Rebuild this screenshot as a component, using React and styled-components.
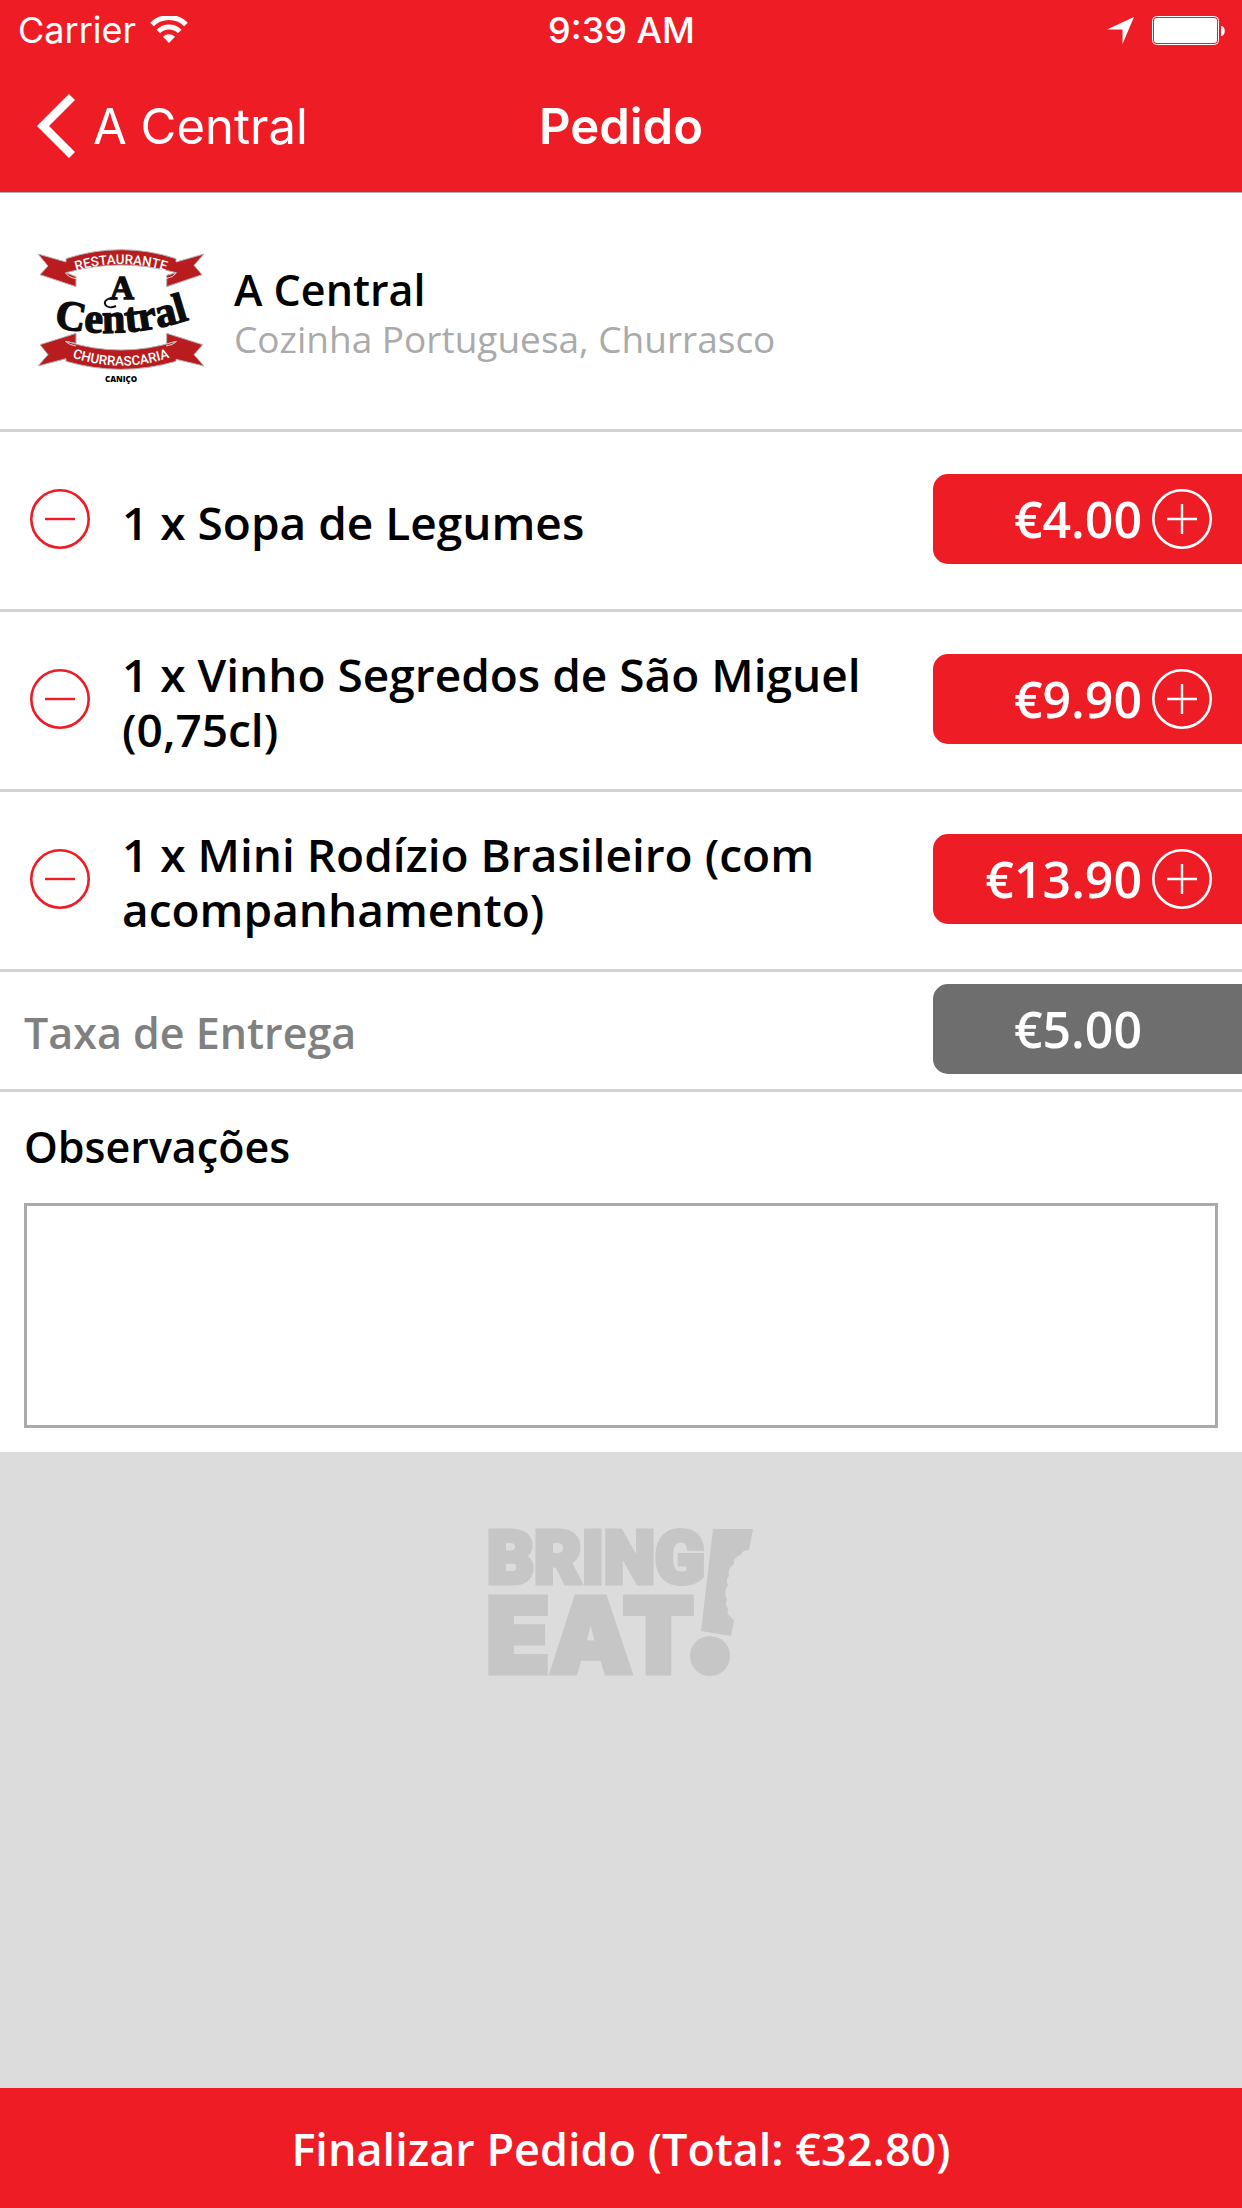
import { useState } from "react";
import styled, { createGlobalStyle } from "styled-components";

const EstiloGlobal = createGlobalStyle`
  * {
    box-sizing: border-box;
  }

  body {
    margin: 0;
    font-family: "Open Sans", "Noto Sans", sans-serif;
    color: #000;
  }

  button {
    border: none;
    padding: 0;
    background: none;
    color: inherit;
    font-family: inherit;
    cursor: pointer;
  }

  svg {
    display: block;
  }
`;

const Pagina = styled.div`
  min-height: 100vh;
  display: flex;
  flex-direction: column;
  background-color: #dcdcdc;
`;
const Topo = styled.header`
  background-color: #ee1c25;
  border-bottom: 1px solid #b2b2b2;
  color: #fff;
  font-family: Inter, Roboto, sans-serif;
`;
const BarraStatus = styled.div`
  display: grid;
  grid-template-columns: 1fr auto 1fr;
  align-items: center;
  height: 60px;
  padding: 0 17px 0 18px;
  font-size: 36px;
`;
const Operadora = styled.span`
  display: flex;
  align-items: center;
  gap: 14px;
`;
const Hora = styled.span`
  font-weight: 500;
`;
const Indicadores = styled.span`
  display: flex;
  align-items: center;
  justify-content: flex-end;
  gap: 18px;
`;
const BarraNavegacao = styled.nav`
  display: grid;
  grid-template-columns: 1fr auto 1fr;
  align-items: center;
  height: 132px;
  padding: 0 36px;
`;
const Voltar = styled.a`
  display: flex;
  align-items: center;
  gap: 18px;
  color: inherit;
  font-size: 49px;
  text-decoration: none;
`;
const Titulo = styled.h1`
  margin: 0;
  font-size: 49px;
  font-weight: 600;
`;
const Conteudo = styled.main`
  background-color: #fff;
`;
const Restaurante = styled.section`
  display: flex;
  align-items: center;
  gap: 28px;
  height: 239px;
  padding-left: 36px;
  border-bottom: 3px solid #d2d2d2;
`;
const Descricao = styled.div`
  padding-top: 5px;
`;
const NomeRestaurante = styled.h2`
  margin: 0;
  font-size: 43px;
  font-weight: 600;
  line-height: 50px;
`;
const Cozinha = styled.p`
  margin: 0;
  color: #aaa;
  font-size: 37px;
  line-height: 48px;
`;
const Lista = styled.ul`
  margin: 0;
  padding: 0;
  list-style: none;
`;
const Linha = styled.li`
  display: flex;
  align-items: center;
  min-height: ${(props) => (props.$baixa ? "120px" : "180px")};
  padding-left: ${(props) => (props.$baixa ? "24px" : "30px")};
  padding-bottom: 3px;
  border-bottom: 3px solid #d2d2d2;
`;
const BotaoCirculo = styled.button`
  flex: none;
  width: 60px;
  height: 60px;
`;
const NomeItem = styled.span`
  flex: 1;
  padding: 6px 24px 0 32px;
  font-size: 46px;
  font-weight: 600;
  line-height: 55px;
`;
const NomeTaxa = styled.span`
  flex: 1;
  padding-top: 6px;
  color: #808080;
  font-size: 43px;
  font-weight: 600;
`;
const Preco = styled.div`
  flex: none;
  display: flex;
  align-items: center;
  justify-content: flex-end;
  gap: 10px;
  width: 309px;
  height: 90px;
  padding-right: ${(props) => (props.$taxa ? "100px" : "30px")};
  border-radius: 15px 0 0 15px;
  background-color: ${(props) => (props.$taxa ? "#6e6e6e" : "#ee1c25")};
  color: #fff;
  font-size: 50px;
  font-weight: 600;
  line-height: 86px;
`;
const Observacoes = styled.section`
  display: flex;
  flex-direction: column;
  gap: 29px;
  padding: 28px 24px 24px;
`;
const Rotulo = styled.label`
  font-size: 43px;
  font-weight: 600;
  line-height: 54px;
`;
const CampoTexto = styled.textarea`
  display: block;
  width: 100%;
  height: 225px;
  padding: 16px;
  border: 3px solid #aaa;
  border-radius: 0;
  outline: none;
  background-color: #fff;
  font-family: inherit;
  font-size: 37px;
  resize: none;
`;
const Marca = styled.div`
  flex: 1;
  display: flex;
  justify-content: center;
  padding: 60px 0;
`;
const Finalizar = styled.button`
  && {
    height: 120px;
    background-color: #ee1c25;
    color: #fff;
    font-size: 45px;
    font-weight: 600;
  }
`;

function IconeWifi() {
  return (
    <svg width="38" height="28" viewBox="0 0 38 28" fill="none" stroke="#fff">
      <path d="M2 8.500a24 24 0 0 1 34 0" strokeWidth="5" />
      <path d="M8.300 15.500a15 15 0 0 1 21.400 0" strokeWidth="5" />
      <path d="M19 27l-6-6.300a8.600 8.600 0 0 1 12 0z" fill="#fff" stroke="none" />
    </svg>
  );
}

function IconeLocalizacao() {
  return (
    <svg width="27" height="27" viewBox="0 0 27 27" fill="#fff">
      <path d="M27 0L15.500 27V12.500H0z" />
    </svg>
  );
}

function IconeBateria() {
  return (
    <svg width="73" height="29" viewBox="0 0 73 29" fill="#fff">
      <rect x="0.500" y="0.500" width="66" height="28" rx="4" fill="none" stroke="#fff" />
      <rect x="2" y="2" width="63" height="25" rx="3" />
      <path d="M69 10c5 0 5 10 0 10z" />
    </svg>
  );
}

function IconeSeta() {
  return (
    <svg width="39" height="64" viewBox="0 0 39 64" fill="none" stroke="#fff" strokeWidth="8.500">
      <path d="M36 3L7 32l29 29" />
    </svg>
  );
}

function IconeCirculo({ cor, mais }) {
  return (
    <svg width="60" height="60" viewBox="0 0 60 60" fill="none" stroke={cor}>
      <circle cx="30" cy="30" r="28.700" strokeWidth="2.600" />
      <path d={mais ? "M15 30h30M30 15v30" : "M15 30h30"} strokeWidth="2.400" />
    </svg>
  );
}

function LogoRestaurante() {
  return (
    <svg width="170" height="150" viewBox="48 18 510 450" role="img" aria-label="A Central">
      <defs>
        <path id="arco-cima" d="M150 128Q303 76 456 128" />
        <path id="arco-baixo" d="M150 380Q303 434 456 380" />
        <path id="arco-nome" d="M100 290Q300 336 510 268" />
      </defs>
      <g fill="#b91c1e" stroke="#b5b5b5" strokeWidth="3">
        <path d="M54 72L138 96V86Q303 32 468 86V96L552 72L522 106L546 134L440 170V136L468 128Q303 82 138 128L168 140V170L60 134L84 108z" />
        <path d="M54 408L84 374L60 344L168 310V340L138 334Q303 386 468 334L440 342V310L548 344L522 374L552 408L468 388V394Q303 442 138 394V386z" />
      </g>
      <path
        d="M136 128Q145 142 168 146M470 128Q460 142 438 146M136 334Q150 346 168 348M470 334Q458 346 438 348"
        fill="none"
        stroke="#f4dada"
        strokeWidth="3"
      />
      <g fill="#fff" fontFamily="Roboto, sans-serif" fontWeight="500" fontSize="40" textAnchor="middle">
        <text>
          <textPath href="#arco-cima" startOffset="50%">RESTAURANTE</textPath>
        </text>
        <text>
          <textPath href="#arco-baixo" startOffset="50%">CHURRASCARIA</textPath>
        </text>
      </g>
      <g
        fill="#0c0c0c"
        stroke="#0c0c0c"
        strokeWidth="4"
        fontFamily="Liberation Serif, serif"
        fontWeight="700"
        textAnchor="middle"
      >
        <text x="306" y="208" fontSize="100">A</text>
        <text fontSize="126">
          <textPath href="#arco-nome" startOffset="50%">Central</textPath>
        </text>
      </g>
      <path d="M284 208C268 200 250 212 256 224C262 234 276 234 288 228" fill="none" stroke="#0c0c0c" strokeWidth="6" />
      <text x="303" y="456" fontSize="24" fontFamily="Open Sans, sans-serif" fontWeight="800" textAnchor="middle">
        CANIÇO
      </text>
    </svg>
  );
}

function LogoBringEat() {
  return (
    <svg width="284" height="194" viewBox="-8 -12 284 194" fill="#c6c6c6" role="img" aria-label="Bring Eat!">
      <g fontWeight="900" stroke="#c6c6c6">
        <text x="0" y="59" fontSize="73" fontFamily="Roboto, sans-serif" strokeWidth="5">BRING</text>
        <text x="-1" y="149" fontSize="104" fontFamily="Inter, sans-serif" strokeWidth="5">EAT</text>
      </g>
      <path d="M226 5H266L262 26Q255 26 254 31Q246 33 247 40Q240 45 242 52Q238 56 241 61Q236 68 240 76Q237 81 241 84Q239 90 245 94Q246 99 248 92L244 112L214 107z" />
      <circle cx="223" cy="132" r="20" />
    </svg>
  );
}

const itensIniciais = [
  { id: 1, nome: "Sopa de Legumes", preco: 4, quantidade: 1 },
  { id: 2, nome: "Vinho Segredos de São Miguel (0,75cl)", preco: 9.9, quantidade: 1 },
  { id: 3, nome: "Mini Rodízio Brasileiro (com acompanhamento)", preco: 13.9, quantidade: 1 },
];
const taxaEntrega = 5;

function formatar(valor) {
  return `€${valor.toFixed(2)}`;
}

function App() {
  const [itens, setItens] = useState(itensIniciais);
  const total = itens.reduce((soma, item) => soma + item.preco * item.quantidade, taxaEntrega);

  function alterar(id, diferenca) {
    setItens(
      itens
        .map((item) => (item.id === id ? { ...item, quantidade: item.quantidade + diferenca } : item))
        .filter((item) => item.quantidade > 0)
    );
  }

  return (
    <Pagina>
      <EstiloGlobal />
      <Topo>
        <BarraStatus>
          <Operadora>
            Carrier
            <IconeWifi />
          </Operadora>
          <Hora>9:39 AM</Hora>
          <Indicadores>
            <IconeLocalizacao />
            <IconeBateria />
          </Indicadores>
        </BarraStatus>
        <BarraNavegacao>
          <Voltar href="#restaurante">
            <IconeSeta />
            A Central
          </Voltar>
          <Titulo>Pedido</Titulo>
        </BarraNavegacao>
      </Topo>
      <Conteudo>
        <Restaurante id="restaurante">
          <LogoRestaurante />
          <Descricao>
            <NomeRestaurante>A Central</NomeRestaurante>
            <Cozinha>Cozinha Portuguesa, Churrasco</Cozinha>
          </Descricao>
        </Restaurante>
        <Lista>
          {itens.map((item) => (
            <Linha key={item.id}>
              <BotaoCirculo aria-label={`Remover ${item.nome}`} onClick={() => alterar(item.id, -1)}>
                <IconeCirculo cor="#ee1c25" />
              </BotaoCirculo>
              <NomeItem>{`${item.quantidade} x ${item.nome}`}</NomeItem>
              <Preco>
                {formatar(item.preco * item.quantidade)}
                <BotaoCirculo aria-label={`Adicionar ${item.nome}`} onClick={() => alterar(item.id, 1)}>
                  <IconeCirculo cor="#fff" mais />
                </BotaoCirculo>
              </Preco>
            </Linha>
          ))}
          <Linha $baixa>
            <NomeTaxa>Taxa de Entrega</NomeTaxa>
            <Preco $taxa>{formatar(taxaEntrega)}</Preco>
          </Linha>
        </Lista>
        <Observacoes>
          <Rotulo htmlFor="observacoes">Observações</Rotulo>
          <CampoTexto id="observacoes" />
        </Observacoes>
      </Conteudo>
      <Marca>
        <LogoBringEat />
      </Marca>
      <Finalizar>{`Finalizar Pedido (Total: ${formatar(total)})`}</Finalizar>
    </Pagina>
  );
}

export default App;
